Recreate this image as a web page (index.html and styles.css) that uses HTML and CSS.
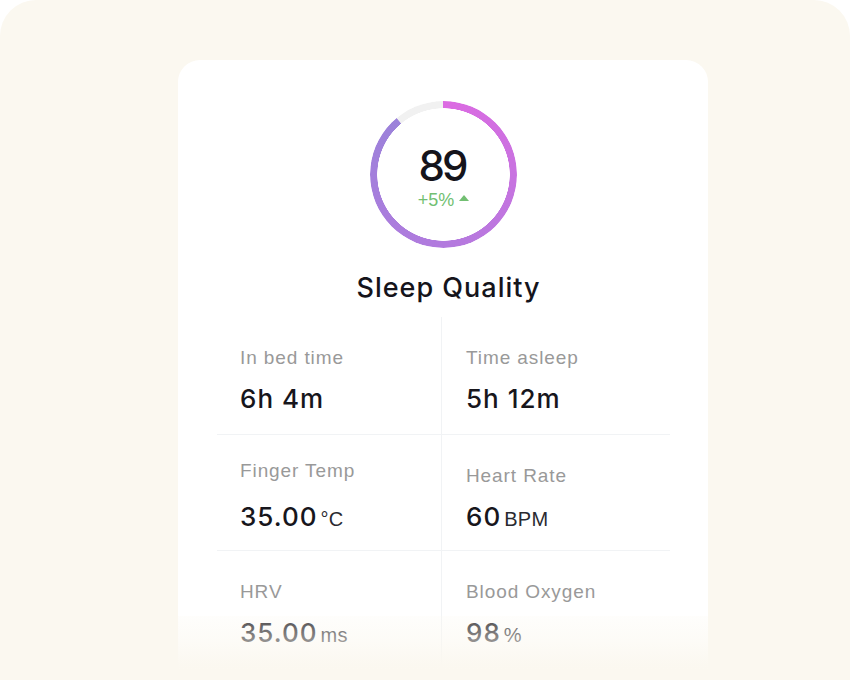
FILE: index.html
```html
<!DOCTYPE html>
<html>
<head>
<meta charset="utf-8">
<link rel="stylesheet" href="styles.css">
</head>
<body>
<div class="panel">
  <div class="card">
    <div class="ring">
      <div class="ring-arc"></div>
      <div class="ring-center">
        <div class="score">89</div>
        <div class="delta">+5%<span class="tri"></span></div>
      </div>
    </div>
    <div class="title">Sleep Quality</div>
    <div class="grid">
      <div class="cell cell-left">
        <div class="label">In bed time</div>
        <div class="value">6h 4m</div>
      </div>
      <div class="cell">
        <div class="label">Time asleep</div>
        <div class="value">5h 12m</div>
      </div>
      <div class="cell cell-left cell-raised">
        <div class="label">Finger Temp</div>
        <div class="value">35.00<span class="unit">°C</span></div>
      </div>
      <div class="cell">
        <div class="label">Heart Rate</div>
        <div class="value">60<span class="unit">BPM</span></div>
      </div>
      <div class="cell cell-left cell-last">
        <div class="label">HRV</div>
        <div class="value">35.00<span class="unit">ms</span></div>
      </div>
      <div class="cell cell-last">
        <div class="label">Blood Oxygen</div>
        <div class="value">98<span class="unit">%</span></div>
      </div>
    </div>
  </div>
  <div class="fade"></div>
</div>
</body>
</html>
```
FILE: styles.css
```css
html, body {
  margin: 0;
  padding: 0;
  background: #ffffff;
}
.panel {
  position: relative;
  width: 850px;
  height: 680px;
  box-sizing: border-box;
  background: #fbf8f0;
  border-radius: 36px 36px 0 0;
  padding: 60px 0 0 178px;
  overflow: hidden;
}
.card {
  width: 530px;
  height: 700px;
  box-sizing: border-box;
  background: #ffffff;
  border-radius: 22px;
  padding: 41px 38px 0 39px;
  display: flex;
  flex-direction: column;
}
.ring {
  position: relative;
  width: 147px;
  height: 147px;
  margin: 0 auto;
  display: flex;
  align-items: center;
  justify-content: center;
}
.ring-arc {
  position: absolute;
  inset: 0;
  border-radius: 50%;
  background: conic-gradient(from 0deg, #dc6ae2 0deg, #c873e0 90deg, #b27ade 180deg, #9b82da 320deg, #f1f1f1 320.5deg, #f1f1f1 360deg);
  -webkit-mask: radial-gradient(farthest-side, transparent calc(100% - 7.5px), #000 calc(100% - 7px));
  mask: radial-gradient(farthest-side, transparent calc(100% - 7.5px), #000 calc(100% - 7px));
}
.ring-center {
  position: relative;
  display: flex;
  flex-direction: column;
  align-items: center;
  margin-top: 4px;
}
.score {
  font-family: Inter, "Noto Sans", sans-serif;
  font-weight: 500;
  font-size: 42px;
  line-height: 44px;
  letter-spacing: -3px;
  padding-right: 3px;
  color: #15141b;
}
.delta {
  display: flex;
  align-items: center;
  font-family: "Liberation Sans", Arial, sans-serif;
  font-size: 18px;
  line-height: 20px;
  color: #72bf72;
  margin-top: 2px;
}
.tri {
  width: 0;
  height: 0;
  border-left: 5px solid transparent;
  border-right: 5px solid transparent;
  border-bottom: 6px solid #72bf72;
  margin-left: 5px;
  margin-top: -3px;
}
.title {
  margin-top: 25px;
  padding-left: 10px;
  text-align: center;
  font-family: Inter, "Noto Sans", sans-serif;
  font-weight: 500;
  font-size: 27px;
  line-height: 30px;
  letter-spacing: 1px;
  color: #15141b;
}
.grid {
  margin-top: 14px;
  display: grid;
  grid-template-columns: 225px 228px;
}
.cell {
  height: 118px;
  box-sizing: border-box;
  padding: 30px 0 0 24px;
  border-bottom: 1px solid #f1f3f5;
}
.cell-left {
  padding-left: 23px;
  border-right: 1px solid #f1f3f5;
}
.cell:nth-child(3), .cell:nth-child(4) {
  height: 116px;
}
.cell-raised {
  padding-top: 25px;
}
.cell-raised .value {
  margin-top: 20px;
}
.cell-last {
  border-bottom: none;
  height: 140px;
}
.label {
  font-family: "Liberation Sans", Arial, sans-serif;
  font-size: 19px;
  line-height: 22px;
  letter-spacing: 0.9px;
  color: #999999;
}
.value {
  margin-top: 15px;
  font-family: Inter, "Liberation Sans", Arial, sans-serif;
  font-weight: 500;
  font-size: 26px;
  line-height: 30px;
  letter-spacing: 1px;
  color: #17161c;
  display: flex;
  align-items: baseline;
}
.unit {
  font-family: "Liberation Sans", Arial, sans-serif;
  font-weight: 400;
  font-size: 20px;
  letter-spacing: 0.3px;
  margin-left: 3px;
  color: #2a2a30;
}
.fade {
  position: absolute;
  left: 0;
  right: 0;
  bottom: 0;
  height: 64px;
  background: linear-gradient(to bottom, rgba(251, 248, 240, 0.22) 0%, rgba(251, 248, 240, 0.55) 40%, rgba(251, 248, 240, 0.95) 75%, #fbf8f0 85%);
}
```
